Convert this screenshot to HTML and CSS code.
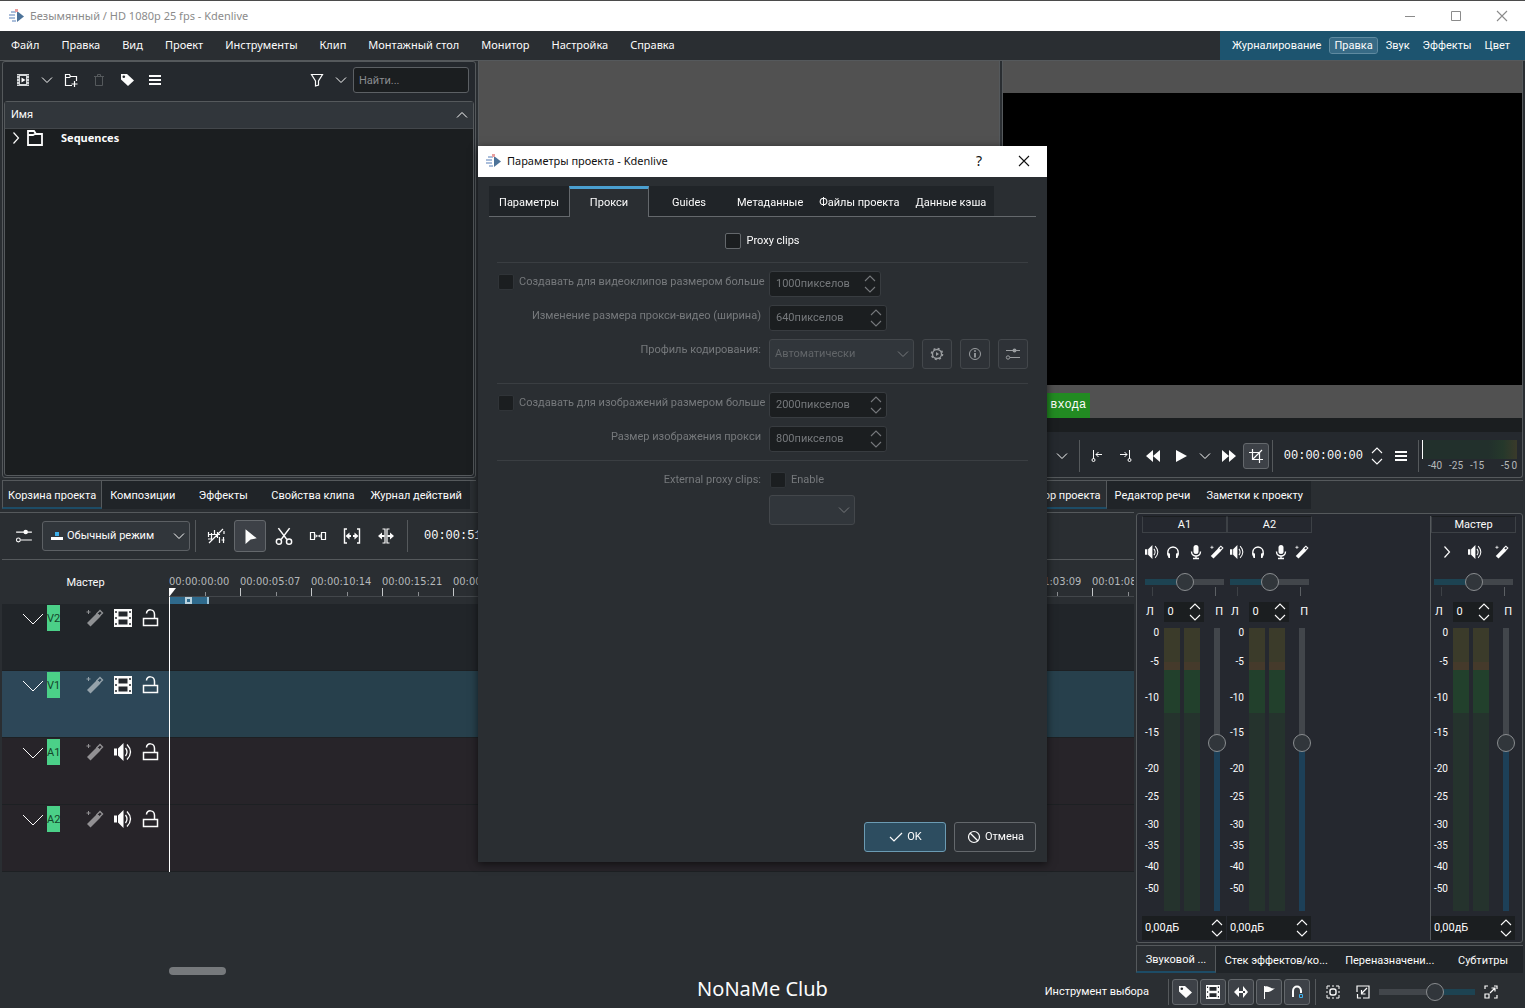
FILE: index.html
```
<!DOCTYPE html>
<html lang="ru">
<head>
    <meta charset="UTF-8">
    <meta name="viewport" content="width=device-width, initial-scale=1.0">
    <title>Безымянный / HD 1080p 25 fps - Kdenlive</title>
    <link rel="stylesheet" href="styles.css">
</head>
<body>
    <!-- Icon sprite -->
    <svg class="sprite" aria-hidden="true">
        <symbol id="i-logo" viewBox="0 0 16 16"><path d="M2 4h5M0 7h6M0 10h6M3 13h4" stroke="#8fa9cf" stroke-width="1.5"/><path d="M8 3v11l7-5.500z" fill="#4d7399"/><path d="M6 1h3v3H6z" fill="#e9a0a0"/></symbol>
        <symbol id="i-down" viewBox="0 0 16 16"><path d="M3 5.500l5 5 5-5" fill="none" stroke="currentColor"/></symbol>
        <symbol id="i-up" viewBox="0 0 16 16"><path d="M3 10.500l5-5 5 5" fill="none" stroke="currentColor"/></symbol>
        <symbol id="i-right" viewBox="0 0 16 16"><path d="M5.500 2.500l5 5.500-5 5.500" fill="none" stroke="currentColor" stroke-width="1.200"/></symbol>
        <symbol id="i-spin" viewBox="0 0 12 20"><path d="M1 7l5-5 5 5M1 13l5 5 5-5" fill="none" stroke="currentColor" stroke-width="1.100"/></symbol>
        <symbol id="i-clip" viewBox="0 0 16 16"><path d="M2 2h12v12H2z" fill="#d5d8da"/><path d="M5 4h6v8H5z" fill="#24282d"/><path d="M6.500 5.500v5l4-2.500z" fill="#fff"/><path d="M3 3v10M13 3v10" stroke="#24282d" stroke-dasharray="1 2"/></symbol>
        <symbol id="i-addfolder" viewBox="0 0 16 16"><path d="M9 13.500H2.500v-11h4l1 2h6V9M2.500 5.500h4l1-1M11.500 9v6M8.500 12h6" fill="none" stroke="currentColor" stroke-width="1.200"/></symbol>
        <symbol id="i-folder" viewBox="0 0 16 16"><path d="M1 15V1h6l2 3h6v11zM1 5h5l2-1" fill="none" stroke="currentColor" stroke-width="1.800"/></symbol>
        <symbol id="i-trash" viewBox="0 0 16 16"><path d="M3 4.500h10M4.500 4.500v9h7v-9M6.500 4V2.500h3V4" fill="none" stroke="currentColor"/></symbol>
        <symbol id="i-tag" viewBox="0 0 16 16"><path d="M2 2h6l7 6.500L9 14 2 7.500z" fill="currentColor"/><circle cx="4.800" cy="4.800" r="1.300" fill="#24282d"/></symbol>
        <symbol id="i-menu" viewBox="0 0 16 16"><path d="M2 4h12M2 8h12M2 12h12" stroke="currentColor" stroke-width="2"/></symbol>
        <symbol id="i-filter" viewBox="0 0 16 16"><path d="M2.500 2.500h11L9.500 9v4l-3 1V9z" fill="none" stroke="currentColor" stroke-width="1.200"/></symbol>
        <symbol id="i-sliders" viewBox="0 0 16 16"><path d="M1 4.500h14M5 11.500h10" stroke="currentColor"/><circle cx="9.500" cy="4.500" r="2" fill="currentColor"/><circle cx="3" cy="11.500" r="1.700" fill="none" stroke="currentColor"/></symbol>
        <symbol id="i-mode" viewBox="0 0 12 12"><path d="M0 7h12v3H0z" fill="#fff"/><path d="M4 2h4v4H4z" fill="#3daee9"/></symbol>
        <symbol id="i-mix" viewBox="0 0 18 18"><path d="M1 7.500h12M1.500 5v5M4.500 6v6M7.500 3v5M10.500 5v6M2 16L16 2M12.500 10v6M14.500 13h3M17 4v3M16.500 10v6M1 12h4" fill="none" stroke="currentColor" stroke-width="1.200"/></symbol>
        <symbol id="i-arrow" viewBox="0 0 16 16"><path d="M4 2l10 8-5.500 1L4 15z" fill="currentColor"/></symbol>
        <symbol id="i-scissors" viewBox="0 0 16 16"><path d="M3 1l7.500 10M13 1L5.500 11" fill="none" stroke="currentColor" stroke-width="1.400"/><circle cx="3.500" cy="13" r="2.300" fill="none" stroke="currentColor" stroke-width="1.300"/><circle cx="12.500" cy="13" r="2.300" fill="none" stroke="currentColor" stroke-width="1.300"/></symbol>
        <symbol id="i-spacer" viewBox="0 0 18 16"><path d="M1.500 4.500h4v7h-4zM12.500 4.500h4v7h-4z" fill="none" stroke="currentColor" stroke-width="1.200"/><path d="M6.500 6v4l2-2zM11.500 6v4l-2-2zM8 7.500h2v1H8z" fill="currentColor"/></symbol>
        <symbol id="i-slip" viewBox="0 0 18 16"><path d="M4 1H1.500v14H4M14 1h2.500v14H14" fill="none" stroke="currentColor" stroke-width="1.400"/><path d="M2.500 8l4-3.500v2.500H8v2H6.500v2.500zM15.500 8l-4-3.500v2.500H10v2h1.500v2.500z" fill="currentColor"/></symbol>
        <symbol id="i-ripple" viewBox="0 0 18 16"><path d="M5.500 1H8v14H5.500M12.500 1H10v14h2.500" fill="none" stroke="currentColor" stroke-width="1.200"/><path d="M1 8l4-3.500v2.500h2.500v2H5v2.500zM17 8l-4-3.500v2.500h-2.500v2H13v2.500z" fill="currentColor"/></symbol>
        <symbol id="i-wand" viewBox="0 0 18 18"><path d="M1 14L11 4l3.500 3.500L4.500 17.500z" fill="currentColor"/><path d="M11 4.500l3-3 2.500 2.500-3 3z" fill="none" stroke="currentColor" stroke-width="1.400"/><path d="M2.500 1v4M.5 3h4" stroke="currentColor"/></symbol>
        <symbol id="i-film" viewBox="0 0 18 18"><path d="M0 0h18v18H0z" fill="currentColor"/><path d="M4.500 2.500h9v5h-9zM4.500 10.500h9v5h-9z" fill="#24282d"/><path d="M2 2v14M16 2v14" stroke="#24282d" stroke-width="1.500" stroke-dasharray="2 4"/></symbol>
        <symbol id="i-lock" viewBox="0 0 18 18"><path d="M1.500 9.500h14v7h-14zM4.500 4.500c0-5 8-5 8 1v4" fill="none" stroke="currentColor" stroke-width="1.500"/></symbol>
        <symbol id="i-speaker" viewBox="0 0 18 18"><path d="M0 5.500h3v7H0zM4 5.500L9.500 0v18L4 12.500z" fill="currentColor"/><path d="M11.500 5q3 4 0 8M13 1.500q7 7.500 0 15" fill="none" stroke="currentColor" stroke-width="1.300"/></symbol>
        <symbol id="i-phones" viewBox="0 0 16 16"><path d="M3.500 12C-1 0 17 0 12.500 12" fill="none" stroke="currentColor" stroke-width="1.300"/><path d="M2 9l3 .5V14H3.500zM14 9l-3 .5V14h1.500z" fill="currentColor"/></symbol>
        <symbol id="i-mic" viewBox="0 0 16 16"><rect x="5.500" y="1" width="5" height="9" rx="2.500" fill="currentColor"/><path d="M3.500 7.500c0 6 9 6 9 0M8 12v3M5 14.500h6" fill="none" stroke="currentColor" stroke-width="1.400"/></symbol>
        <symbol id="i-in" viewBox="0 0 16 16"><path d="M4.500 2v9M7 6.500h6M9.500 4L7 6.500 9.500 9" fill="none" stroke="currentColor"/><circle cx="4.500" cy="12" r="1.500" fill="none" stroke="currentColor"/></symbol>
        <symbol id="i-out" viewBox="0 0 16 16"><path d="M12.500 2v9M3 6.500h7M7.500 4L10 6.500 7.500 9" fill="none" stroke="currentColor"/><circle cx="12.500" cy="12" r="1.500" fill="none" stroke="currentColor"/></symbol>
        <symbol id="i-rew" viewBox="0 0 16 16"><path d="M8 2v12L1 8zM15 2v12L8 8z" fill="currentColor"/></symbol>
        <symbol id="i-play" viewBox="0 0 16 16"><path d="M3 2v12l11-6z" fill="currentColor"/></symbol>
        <symbol id="i-ff" viewBox="0 0 16 16"><path d="M1 2v12l7-6zM8 2v12l7-6z" fill="currentColor"/></symbol>
        <symbol id="i-crop" viewBox="0 0 16 16"><path d="M4.500 1v10.500H15M1 4.500h10.500V15M5 11l9-9" fill="none" stroke="currentColor" stroke-width="1.200"/></symbol>
        <symbol id="i-gear" viewBox="0 0 16 16"><circle cx="8" cy="8" r="4.500" fill="none" stroke="currentColor" stroke-width="1.300"/><circle cx="8" cy="8" r="5.500" fill="none" stroke="currentColor" stroke-width="1.600" stroke-dasharray="2 2.320"/><path d="M7 6v4l3-2z" fill="currentColor"/></symbol>
        <symbol id="i-info" viewBox="0 0 16 16"><circle cx="8" cy="8" r="5.500" fill="none" stroke="currentColor"/><path d="M8 7v4.500M8 4.300v1.500" stroke="currentColor" stroke-width="1.800"/></symbol>
        <symbol id="i-check" viewBox="0 0 16 16"><path d="M2 8l4 4 8-8" fill="none" stroke="currentColor" stroke-width="1.200"/></symbol>
        <symbol id="i-cancel" viewBox="0 0 16 16"><circle cx="8" cy="8" r="5.500" fill="none" stroke="currentColor" stroke-width="1.200"/><path d="M4 4l8 8" stroke="currentColor" stroke-width="1.200"/></symbol>
        <symbol id="i-marks" viewBox="0 0 16 16"><path d="M6 3v10L1 8zM10 2v12l5-6zM4 7h8v2H4z" fill="currentColor"/></symbol>
        <symbol id="i-flag" viewBox="0 0 16 16"><path d="M3.500 2v13" stroke="currentColor"/><path d="M4 2.500c4-1 4 2 10 2-3 1-3 4-10 3.500z" fill="currentColor"/></symbol>
        <symbol id="i-snap" viewBox="0 0 16 16"><path d="M4 13V7c0-6 8-6 8 0v2" fill="none" stroke="currentColor" stroke-width="2"/><path d="M10.500 10.500h3v3h-3z" fill="none" stroke="#3daee9"/></symbol>
        <symbol id="i-fit" viewBox="0 0 16 16"><path d="M2 5V2h3M7 2h2M11 2h3v3M14 7v2M14 11v3h-3M9 14H7M5 14H2v-3M2 9V7" fill="none" stroke="currentColor"/><rect x="5" y="5" width="6" height="6" rx="2" fill="none" stroke="currentColor" stroke-width="1.400"/></symbol>
        <symbol id="i-zoomout" viewBox="0 0 16 16"><path d="M2 8V2h12v12H8M2.500 10v4H6M12 4L6.500 9.500M6.500 6v4h4" fill="none" stroke="currentColor" stroke-width="1.200"/></symbol>
        <symbol id="i-zoomin" viewBox="0 0 16 16"><path d="M2 5V2h3M11 2h3v3M14 11v3h-3M2 10h4v4H2zM7 9l5-5M8.500 4H12v3.500" fill="none" stroke="currentColor" stroke-width="1.200"/></symbol>
        <symbol id="i-min" viewBox="0 0 12 12"><path d="M1 6.500h10" stroke="currentColor"/></symbol>
        <symbol id="i-max" viewBox="0 0 12 12"><path d="M1.500 1.500h9v9h-9z" fill="none" stroke="currentColor"/></symbol>
        <symbol id="i-close" viewBox="0 0 12 12"><path d="M1 1l10 10M11 1L1 11" stroke="currentColor" stroke-width="1.100"/></symbol>
    </svg>

    <header class="titlebar">
        <svg class="icon"><use href="#i-logo"/></svg>
        <span class="titlebar-text">Безымянный / HD 1080p 25 fps - Kdenlive</span>
        <div class="window-buttons">
            <button aria-label="Свернуть"><svg class="icon-s"><use href="#i-min"/></svg></button>
            <button aria-label="Развернуть"><svg class="icon-s"><use href="#i-max"/></svg></button>
            <button aria-label="Закрыть"><svg class="icon-s"><use href="#i-close"/></svg></button>
        </div>
    </header>

    <nav class="menubar">
        <button>Файл</button>
        <button>Правка</button>
        <button>Вид</button>
        <button>Проект</button>
        <button>Инструменты</button>
        <button>Клип</button>
        <button>Монтажный стол</button>
        <button>Монитор</button>
        <button>Настройка</button>
        <button>Справка</button>
        <div class="layouts">
            <button>Журналирование</button>
            <button class="current">Правка</button>
            <button>Звук</button>
            <button>Эффекты</button>
            <button>Цвет</button>
        </div>
    </nav>

    <main class="workspace">
        <div class="upper">
            <!-- Project bin -->
            <section class="dock">
                <div class="bin">
                    <div class="bin-tools">
                        <button class="tool" aria-label="Добавить клип"><svg class="icon"><use href="#i-clip"/></svg></button>
                        <button class="tool" aria-label="Ещё"><svg class="icon"><use href="#i-down"/></svg></button>
                        <button class="tool" aria-label="Создать папку"><svg class="icon"><use href="#i-addfolder"/></svg></button>
                        <button class="tool off" aria-label="Удалить" disabled><svg class="icon"><use href="#i-trash"/></svg></button>
                        <button class="tool" aria-label="Метки"><svg class="icon"><use href="#i-tag"/></svg></button>
                        <button class="tool" aria-label="Меню"><svg class="icon"><use href="#i-menu"/></svg></button>
                        <button class="tool push" aria-label="Фильтр"><svg class="icon"><use href="#i-filter"/></svg></button>
                        <button class="tool narrow" aria-label="Параметры фильтра"><svg class="icon"><use href="#i-down"/></svg></button>
                        <input class="search" type="text" placeholder="Найти..." aria-label="Найти">
                    </div>
                    <div class="tree">
                        <div class="tree-head"><span>Имя</span><svg class="icon"><use href="#i-up"/></svg></div>
                        <div class="tree-row">
                            <svg class="icon"><use href="#i-right"/></svg>
                            <svg class="icon"><use href="#i-folder"/></svg>
                            <b>Sequences</b>
                        </div>
                    </div>
                </div>
                <div class="tabs">
                    <button class="tab active">Корзина проекта</button>
                    <button class="tab">Композиции</button>
                    <button class="tab">Эффекты</button>
                    <button class="tab">Свойства клипа</button>
                    <button class="tab">Журнал действий</button>
                </div>
            </section>

            <!-- Clip monitor -->
            <section class="dock">
                <div class="monitor"><div class="stage"></div></div>
                <div class="tabs"></div>
            </section>

            <!-- Project monitor -->
            <section class="dock">
                <div class="monitor">
                    <div class="stage">
                        <div class="video"></div>
                        <span class="marker">Точка входа</span>
                    </div>
                    <div class="mini-ruler"></div>
                    <div class="monitor-tools">
                        <button class="tool" aria-label="Масштаб"><svg class="icon"><use href="#i-down"/></svg></button>
                        <span class="sep"></span>
                        <button class="tool" aria-label="Точка входа"><svg class="icon"><use href="#i-in"/></svg></button>
                        <button class="tool" aria-label="Точка выхода"><svg class="icon"><use href="#i-out"/></svg></button>
                        <button class="tool" aria-label="Назад"><svg class="icon"><use href="#i-rew"/></svg></button>
                        <button class="tool" aria-label="Воспроизвести"><svg class="icon"><use href="#i-play"/></svg></button>
                        <button class="tool narrow" aria-label="Ещё"><svg class="icon"><use href="#i-down"/></svg></button>
                        <button class="tool" aria-label="Вперёд"><svg class="icon"><use href="#i-ff"/></svg></button>
                        <button class="tool pressed" aria-label="Кадрирование"><svg class="icon"><use href="#i-crop"/></svg></button>
                        <span class="sep"></span>
                        <span class="timecode">00:00:00:00</span>
                        <svg class="spin"><use href="#i-spin"/></svg>
                        <button class="tool" aria-label="Меню"><svg class="icon"><use href="#i-menu"/></svg></button>
                        <span class="sep"></span>
                        <div class="audio">
                            <div class="audio-bar"></div>
                            <div class="audio-scale"><span>-40</span><span>-25</span><span>-15</span><span class="push">-5</span><span>0</span></div>
                        </div>
                    </div>
                </div>
                <div class="tabs">
                    <button class="tab active">Монитор проекта</button>
                    <button class="tab">Редактор речи</button>
                    <button class="tab">Заметки к проекту</button>
                </div>
            </section>
        </div>

        <div class="lower">
            <!-- Timeline -->
            <section class="timeline">
                <div class="timeline-tools">
                    <button class="tool" aria-label="Настройка дорожек"><svg class="icon-l"><use href="#i-sliders"/></svg></button>
                    <div class="combo mode">
                        <svg class="icon-s"><use href="#i-mode"/></svg>
                        <select aria-label="Режим"><option>Обычный режим</option></select>
                        <svg class="icon"><use href="#i-down"/></svg>
                    </div>
                    <span class="sep"></span>
                    <button class="tool" aria-label="Микс"><svg class="icon-l"><use href="#i-mix"/></svg></button>
                    <button class="tool pressed" aria-label="Выбор"><svg class="icon-l"><use href="#i-arrow"/></svg></button>
                    <button class="tool" aria-label="Разрезать"><svg class="icon-l"><use href="#i-scissors"/></svg></button>
                    <button class="tool" aria-label="Интервал"><svg class="icon-l"><use href="#i-spacer"/></svg></button>
                    <button class="tool" aria-label="Сдвиг"><svg class="icon-l"><use href="#i-slip"/></svg></button>
                    <button class="tool" aria-label="Подгонка"><svg class="icon-l"><use href="#i-ripple"/></svg></button>
                    <span class="sep"></span>
                    <span class="timecode">00:00:51:00</span>
                </div>
                <div class="ruler-row">
                    <div class="master">Мастер</div>
                    <div class="ruler">
                        <span>00:00:00:00</span><span>00:00:05:07</span><span>00:00:10:14</span><span>00:00:15:21</span><span>00:00:21:03</span><span>00:00:26:10</span><span>00:00:31:17</span><span>00:00:36:24</span><span>00:00:42:06</span><span>00:00:47:13</span><span>00:00:52:20</span><span>00:00:58:02</span><span>00:01:03:09</span><span>00:01:08:16</span>
                        <div class="zone"></div>
                    </div>
                </div>
                <div class="tracks">
                    <div class="track">
                        <div class="track-head">
                            <svg class="fold" viewBox="0 0 20 12"><path d="M0 1l10 10L20 1" fill="none" stroke="currentColor"/></svg>
                            <span class="track-name">V2</span>
                            <svg class="icon-l dim"><use href="#i-wand"/></svg>
                            <svg class="icon-l"><use href="#i-film"/></svg>
                            <svg class="icon-l"><use href="#i-lock"/></svg>
                        </div>
                        <div class="track-body"></div>
                    </div>
                    <div class="track selected">
                        <div class="track-head">
                            <svg class="fold" viewBox="0 0 20 12"><path d="M0 1l10 10L20 1" fill="none" stroke="currentColor"/></svg>
                            <span class="track-name">V1</span>
                            <svg class="icon-l dim"><use href="#i-wand"/></svg>
                            <svg class="icon-l"><use href="#i-film"/></svg>
                            <svg class="icon-l"><use href="#i-lock"/></svg>
                        </div>
                        <div class="track-body"></div>
                    </div>
                    <div class="track sound">
                        <div class="track-head">
                            <svg class="fold" viewBox="0 0 20 12"><path d="M0 1l10 10L20 1" fill="none" stroke="currentColor"/></svg>
                            <span class="track-name">A1</span>
                            <svg class="icon-l dim"><use href="#i-wand"/></svg>
                            <svg class="icon-l"><use href="#i-speaker"/></svg>
                            <svg class="icon-l"><use href="#i-lock"/></svg>
                        </div>
                        <div class="track-body"></div>
                    </div>
                    <div class="track sound">
                        <div class="track-head">
                            <svg class="fold" viewBox="0 0 20 12"><path d="M0 1l10 10L20 1" fill="none" stroke="currentColor"/></svg>
                            <span class="track-name">A2</span>
                            <svg class="icon-l dim"><use href="#i-wand"/></svg>
                            <svg class="icon-l"><use href="#i-speaker"/></svg>
                            <svg class="icon-l"><use href="#i-lock"/></svg>
                        </div>
                        <div class="track-body"></div>
                    </div>
                </div>
                <div class="scrollbar"><div class="scroll-thumb"></div></div>
            </section>

            <!-- Audio mixer -->
            <section class="mixer-dock">
                <div class="mixer">
                    <div class="strip">
                        <div class="strip-name">A1</div>
                        <div class="strip-icons">
                            <svg class="icon-m"><use href="#i-speaker"/></svg>
                            <svg class="icon"><use href="#i-phones"/></svg>
                            <svg class="icon"><use href="#i-mic"/></svg>
                            <svg class="icon-m"><use href="#i-wand"/></svg>
                        </div>
                        <input class="pan" type="range" value="50" aria-label="Баланс A1">
                        <div class="pan-ticks"></div>
                        <div class="pan-row"><span>Л</span><div class="spinbox"><input type="text" value="0" aria-label="Баланс A1"><svg class="spin"><use href="#i-spin"/></svg></div><span>П</span></div>
                        <div class="levels">
                            <div class="scale"><span>0</span><span>-5</span><span>-10</span><span>-15</span><span>-20</span><span>-25</span><span>-30</span><span>-35</span><span>-40</span><span>-50</span></div>
                            <div class="bar"></div>
                            <div class="bar"></div>
                            <input class="volume" type="range" value="60" aria-label="Громкость A1">
                        </div>
                        <div class="spinbox gain"><input type="text" value="0,00дБ" aria-label="Усиление A1"><svg class="spin"><use href="#i-spin"/></svg></div>
                    </div>
                    <div class="strip">
                        <div class="strip-name">A2</div>
                        <div class="strip-icons">
                            <svg class="icon-m"><use href="#i-speaker"/></svg>
                            <svg class="icon"><use href="#i-phones"/></svg>
                            <svg class="icon"><use href="#i-mic"/></svg>
                            <svg class="icon-m"><use href="#i-wand"/></svg>
                        </div>
                        <input class="pan" type="range" value="50" aria-label="Баланс A2">
                        <div class="pan-ticks"></div>
                        <div class="pan-row"><span>Л</span><div class="spinbox"><input type="text" value="0" aria-label="Баланс A2"><svg class="spin"><use href="#i-spin"/></svg></div><span>П</span></div>
                        <div class="levels">
                            <div class="scale"><span>0</span><span>-5</span><span>-10</span><span>-15</span><span>-20</span><span>-25</span><span>-30</span><span>-35</span><span>-40</span><span>-50</span></div>
                            <div class="bar"></div>
                            <div class="bar"></div>
                            <input class="volume" type="range" value="60" aria-label="Громкость A2">
                        </div>
                        <div class="spinbox gain"><input type="text" value="0,00дБ" aria-label="Усиление A2"><svg class="spin"><use href="#i-spin"/></svg></div>
                    </div>
                    <div class="strip master-strip">
                        <div class="strip-name">Мастер</div>
                        <div class="strip-icons wide">
                            <svg class="icon"><use href="#i-right"/></svg>
                            <svg class="icon-m"><use href="#i-speaker"/></svg>
                            <svg class="icon-m"><use href="#i-wand"/></svg>
                        </div>
                        <input class="pan" type="range" value="50" aria-label="Баланс">
                        <div class="pan-ticks"></div>
                        <div class="pan-row"><span>Л</span><div class="spinbox"><input type="text" value="0" aria-label="Баланс"><svg class="spin"><use href="#i-spin"/></svg></div><span>П</span></div>
                        <div class="levels">
                            <div class="scale"><span>0</span><span>-5</span><span>-10</span><span>-15</span><span>-20</span><span>-25</span><span>-30</span><span>-35</span><span>-40</span><span>-50</span></div>
                            <div class="bar"></div>
                            <div class="bar"></div>
                            <input class="volume" type="range" value="60" aria-label="Громкость">
                        </div>
                        <div class="spinbox gain"><input type="text" value="0,00дБ" aria-label="Усиление"><svg class="spin"><use href="#i-spin"/></svg></div>
                    </div>
                </div>
                <div class="tabs">
                    <button class="tab active">Звуковой ...</button>
                    <button class="tab grow">Стек эффектов/ко...</button>
                    <button class="tab grow">Переназначени...</button>
                    <button class="tab">Субтитры</button>
                </div>
            </section>
        </div>
    </main>

    <footer class="statusbar">
        <span class="status-text">Инструмент выбора</span>
        <span class="sep"></span>
        <button class="tool pressed" aria-label="Цветовые метки"><svg class="icon"><use href="#i-tag"/></svg></button>
        <button class="tool pressed" aria-label="Миниатюры видео"><svg class="icon-m"><use href="#i-film"/></svg></button>
        <button class="tool pressed" aria-label="Миниатюры звука"><svg class="icon"><use href="#i-marks"/></svg></button>
        <button class="tool pressed" aria-label="Маркеры"><svg class="icon"><use href="#i-flag"/></svg></button>
        <button class="tool pressed" aria-label="Прилипание"><svg class="icon"><use href="#i-snap"/></svg></button>
        <span class="sep"></span>
        <button class="tool" aria-label="Весь проект"><svg class="icon"><use href="#i-fit"/></svg></button>
        <button class="tool" aria-label="Уменьшить"><svg class="icon"><use href="#i-zoomout"/></svg></button>
        <input class="zoom" type="range" value="60" aria-label="Масштаб">
        <button class="tool" aria-label="Увеличить"><svg class="icon"><use href="#i-zoomin"/></svg></button>
    </footer>
    <div class="watermark">NoNaMe Club</div>

    <!-- Project settings -->
    <div class="overlay">
        <div class="dialog" role="dialog" aria-label="Параметры проекта">
            <div class="dialog-title">
                <svg class="icon"><use href="#i-logo"/></svg>
                <span>Параметры проекта - Kdenlive</span>
                <button class="push" aria-label="Справка">?</button>
                <button aria-label="Закрыть"><svg class="icon-s"><use href="#i-close"/></svg></button>
            </div>
            <div class="dialog-tabs">
                <button class="tab">Параметры</button>
                <button class="tab active">Прокси</button>
                <button class="tab">Guides</button>
                <button class="tab">Метаданные</button>
                <button class="tab">Файлы проекта</button>
                <button class="tab">Данные кэша</button>
            </div>
            <form class="proxy">
                <label class="check main-check"><input type="checkbox">Proxy clips</label>
                <fieldset disabled>
                    <label class="check"><input type="checkbox">Создавать для видеоклипов размером больше</label>
                    <div class="spinbox small"><input type="text" value="1000пикселов" aria-label="Размер видеоклипов"><svg class="spin"><use href="#i-spin"/></svg></div>
                    <label for="resize">Изменение размера прокси-видео (ширина)</label>
                    <div class="spinbox"><input id="resize" type="text" value="640пикселов"><svg class="spin"><use href="#i-spin"/></svg></div>
                    <label for="profile">Профиль кодирования:</label>
                    <div class="profile">
                        <div class="combo">
                            <select id="profile"><option>Автоматически</option></select>
                            <svg class="icon"><use href="#i-down"/></svg>
                        </div>
                        <button type="button" aria-label="Настроить"><svg class="icon"><use href="#i-gear"/></svg></button>
                        <button type="button" aria-label="Сведения"><svg class="icon"><use href="#i-info"/></svg></button>
                        <button type="button" aria-label="Профили"><svg class="icon"><use href="#i-sliders"/></svg></button>
                    </div>
                </fieldset>
                <fieldset disabled>
                    <label class="check"><input type="checkbox">Создавать для изображений размером больше</label>
                    <div class="spinbox"><input type="text" value="2000пикселов" aria-label="Размер изображений"><svg class="spin"><use href="#i-spin"/></svg></div>
                    <label for="imgsize">Размер изображения прокси</label>
                    <div class="spinbox"><input id="imgsize" type="text" value="800пикселов"><svg class="spin"><use href="#i-spin"/></svg></div>
                </fieldset>
                <fieldset disabled>
                    <span class="caption">External proxy clips:</span>
                    <label class="check enable"><input type="checkbox">Enable</label>
                    <div class="combo external">
                        <select aria-label="External proxy clips"></select>
                        <svg class="icon"><use href="#i-down"/></svg>
                    </div>
                </fieldset>
            </form>
            <div class="dialog-buttons">
                <button class="ok"><svg class="icon"><use href="#i-check"/></svg>OK</button>
                <button><svg class="icon"><use href="#i-cancel"/></svg>Отмена</button>
            </div>
        </div>
    </div>
</body>
</html>
```
FILE: styles.css
```
* {
    box-sizing: border-box;
}
body {
    margin: 0;
    height: 100vh;
    display: flex;
    flex-direction: column;
    overflow: hidden;
    background-color: #2a2e32;
    color: #fcfcfc;
    font-family: Roboto, "Noto Sans", sans-serif;
    font-size: 11px;
    line-height: 16px;
}
button, input, select {
    margin: 0;
    padding: 0;
    border: 0;
    background: none;
    color: inherit;
    font: inherit;
}
svg {
    display: block;
    flex: none;
}
.sprite {
    position: absolute;
    width: 0;
    height: 0;
}
.icon { width: 16px; height: 16px; }
.icon-s { width: 12px; height: 12px; }
.icon-m { width: 14px; height: 14px; }
.icon-l { width: 18px; height: 18px; }
.spin { width: 12px; height: 20px; }
.push { margin-left: auto; }

/* Title bar and menu */
.titlebar, .menubar > button, .dialog-title, .watermark {
    font-family: "Noto Sans", sans-serif;
}
.titlebar {
    display: flex;
    align-items: center;
    flex: none;
    height: 31px;
    padding: 0 0 1px 9px;
    gap: 5px;
    border-top: 1px solid #4b4b4b;
    background-color: #fff;
    color: #8b8b8b;
}
.window-buttons {
    display: flex;
    margin-left: auto;
}
.window-buttons button {
    display: flex;
    align-items: center;
    justify-content: center;
    width: 46px;
    height: 30px;
}
.menubar {
    display: flex;
    align-items: stretch;
    flex: none;
    height: 29px;
}
.menubar > button {
    padding: 0 11px 2px;
}
.layouts {
    display: flex;
    align-items: center;
    gap: 5px;
    margin-left: auto;
    padding: 0 11px 0 8px;
    background-color: #1d546f;
}
.layouts button {
    height: 15px;
    padding: 0 4px;
    border-radius: 2px;
}
.layouts .current {
    background-color: #376a85;
    outline: 1px solid #5f8aa0;
}

/* Docks */
.workspace {
    flex: 1;
    min-height: 0;
    display: grid;
    grid-template-columns: minmax(0, 1fr);
    grid-template-rows: 451fr 464fr;
    border-top: 1px solid #55595c;
}
.upper {
    display: grid;
    grid-template-columns: minmax(0, 476fr) minmax(0, 522fr) minmax(0, 521fr);
    gap: 2px;
    min-height: 0;
    padding-right: 2px;
}
.dock {
    display: flex;
    flex-direction: column;
    min-width: 0;
    min-height: 0;
}
.tabs {
    display: flex;
    flex: none;
    height: 29px;
    margin: 2px 0 3px 2px;
    border-top: 1px solid #55595c;
}
.tab {
    min-width: 80px;
    padding: 3px 8px 0;
    background-color: #202428;
    white-space: nowrap;
}
.tabs .active {
    background-color: #2a2e32;
    border-right: 1px solid #55595c;
    border-left: 1px solid #55595c;
    border-bottom: 2px solid #1d4c66;
    padding: 5px 5px 0;
}
.tab.grow {
    flex: 1 1 auto;
}
.tool {
    display: flex;
    align-items: center;
    justify-content: center;
    flex: none;
    width: 28px;
    height: 26px;
}
.tool.narrow {
    width: 20px;
}
.tool.pressed {
    border: 1px solid #64686c;
    border-radius: 3px;
    background-color: #3d4147;
}
.off {
    color: #55595c;
}
.sep {
    flex: none;
    width: 1px;
    height: 32px;
    background-color: #55595c;
}

/* Project bin */
.bin {
    flex: 1;
    display: flex;
    flex-direction: column;
    margin-left: 2px;
    padding: 0 1px 1px;
    border: 1px solid #55595c;
    border-radius: 3px;
    background-color: #25292e;
}
.bin-tools {
    display: flex;
    align-items: center;
    height: 36px;
    margin-bottom: 3px;
    padding: 0 5px 0 7px;
}
.bin-tools .tool:nth-child(-n+3) {
    width: 24px;
}
.bin-tools .off {
    margin-left: 2px;
}
.search {
    width: 116px;
    height: 26px;
    margin-left: 2px;
    padding: 0 5px;
    border: 1px solid #5c6064;
    border-radius: 3px;
    background-color: #1b1e20;
}
.search::placeholder {
    color: #8a8d90;
}
.tree {
    flex: 1;
    border: 1px solid #55595c;
    border-radius: 3px;
    background-color: #1b1e20;
}
.tree-head {
    display: flex;
    align-items: center;
    justify-content: space-between;
    height: 27px;
    padding: 0 3px 0 6px;
    border-bottom: 1px solid #43474b;
    background-color: #31363b;
}
.tree-row {
    display: flex;
    align-items: center;
    height: 18px;
    padding-left: 3px;
    gap: 3px;
}
.tree-row b {
    margin-left: 15px;
    font-family: "Noto Sans", sans-serif;
}

/* Monitors */
.monitor {
    flex: 1;
    display: flex;
    flex-direction: column;
    border: 1px solid #55595c;
    border-top: 0;
    border-radius: 0 0 3px 3px;
    background-color: #25292e;
}
.stage {
    flex: 1;
    display: flex;
    align-items: center;
    position: relative;
    background-color: #515151;
}
.video {
    width: 100%;
    aspect-ratio: 16 / 9;
    background-color: #000;
}
.marker {
    position: absolute;
    left: 0;
    bottom: 0;
    height: 25px;
    padding: 0 4px;
    background-color: #228b22;
    font-family: "Liberation Mono", monospace;
    font-size: 12px;
    line-height: 25px;
}
.mini-ruler {
    height: 14px;
    background-color: #1b1e20;
}
.monitor-tools {
    display: flex;
    align-items: center;
    justify-content: flex-end;
    height: 45px;
    padding: 4px 5px 0 0;
}
.monitor-tools .sep {
    margin: 0 3px;
}
.monitor-tools .pressed {
    width: 26px;
}
.monitor-tools .spin {
    margin-right: 4px;
}
.timecode {
    margin: 0 8px;
    font-family: "Liberation Mono", monospace;
    font-size: 12px;
}
.audio {
    width: 95px;
    color: #b5b8ba;
    font-size: 10px;
}
.audio-bar {
    height: 19px;
    border-left: 1px solid #fcfcfc;
    background: linear-gradient(90deg, #22302c 0 70%, #25382b 85%, #3a3a2a);
}
.audio-scale {
    display: flex;
    gap: 7px;
    padding-left: 6px;
    line-height: 14px;
}
.audio-scale .push + span {
    margin-left: -5px;
}

/* Timeline */
.lower {
    display: flex;
    gap: 2px;
    min-height: 0;
}
.timeline {
    flex: 1;
    min-width: 0;
    display: flex;
    flex-direction: column;
    padding-left: 2px;
    border-top: 1px solid #55595c;
}
.timeline-tools {
    display: flex;
    align-items: center;
    flex: none;
    height: 47px;
    padding-left: 5px;
    gap: 2px;
    border-bottom: 1px solid #55595c;
}
.timeline-tools .tool {
    width: 32px;
    height: 32px;
}
.timeline-tools .sep {
    margin: 0 2px 0 3px;
}
.timeline-tools .timecode {
    margin-left: 12px;
}
.timeline-tools .tool:first-child {
    width: 34px;
    margin-right: -1px;
}
.combo {
    display: flex;
    align-items: center;
    height: 30px;
    padding: 0 2px 0 5px;
    border: 1px solid #5c6064;
    border-radius: 3px;
    background-color: #31363b;
}
.combo select {
    flex: 1;
    min-width: 0;
    appearance: none;
}
.mode {
    width: 148px;
    padding-left: 8px;
    gap: 4px;
}
.ruler-row {
    display: flex;
    flex: none;
    height: 44px;
}
.master {
    width: 167px;
    padding-top: 15px;
    text-align: center;
}
.ruler {
    flex: 1;
    min-width: 0;
    display: flex;
    position: relative;
    padding-top: 14px;
    overflow: hidden;
    color: #b5b8ba;
    font-family: "DejaVu Sans Condensed", "Noto Sans", sans-serif;
}
.ruler span {
    flex: none;
    width: 71px;
    height: 23px;
    border-bottom: 1px solid #43474b;
    background: linear-gradient(#c5c8ca, #c5c8ca) 0 100% / 1px 8px no-repeat, linear-gradient(#8a8d90, #8a8d90) 36px 100% / 1px 4px no-repeat;
}
.zone {
    position: absolute;
    left: 0;
    bottom: 0;
    width: 40px;
    height: 7px;
    border-right: 2px solid #9cc3d8;
    background: linear-gradient(#2f6a8c, #2f6a8c) 18px 2px / 3px 3px no-repeat, linear-gradient(#b9d2de, #b9d2de) 16px 0 / 7px 7px no-repeat #2f6a8c;
}
.ruler::before {
    content: "";
    position: absolute;
    left: 0;
    top: 28px;
    border-top: 9px solid #fff;
    border-right: 7px solid transparent;
}
.tracks {
    position: relative;
    flex: none;
}
.tracks::after {
    content: "";
    position: absolute;
    top: -7px;
    bottom: 0;
    left: 167px;
    width: 1px;
    background-color: #fff;
}
.track {
    display: flex;
    height: 67px;
    border-bottom: 1px solid #1d2023;
    background-color: #212529;
}
.track.sound {
    background-color: #272429;
}
.track.selected {
    background-color: #27404c;
}
.track-head {
    display: flex;
    align-items: flex-start;
    width: 167px;
    padding: 5px 0 0 21px;
}
.track-head .icon-l {
    margin-right: 10px;
}
.selected .track-head {
    background-color: #2d4758;
}
.fold {
    width: 20px;
    height: 12px;
    margin-top: 4px;
}
.track-name {
    width: 14px;
    height: 26px;
    margin: -4px 26px 0 4px;
    background-color: #4bd088;
    color: #14442a;
    line-height: 27px;
    text-align: center;
}
.dim {
    opacity: 0.5;
}
.scrollbar {
    margin: auto 0 0 167px;
}
.scroll-thumb {
    width: 57px;
    height: 8px;
    border-radius: 4px;
    background-color: #76797c;
}

/* Audio mixer */
.mixer-dock {
    flex: none;
    width: 389px;
    display: flex;
    flex-direction: column;
    padding: 0 2px 2px 0;
}
.mixer {
    flex: 1;
    min-height: 0;
    display: flex;
    margin-top: 1px;
    padding: 2px 6px 2px 5px;
    border: 1px solid #55595c;
    border-radius: 3px;
    background-color: #25282f;
}
.mixer-dock .tabs {
    height: 28px;
    margin: 2px 0 0;
}
.mixer-dock .tabs .active {
    padding: 3px 7px 0;
}
.strip {
    display: flex;
    flex-direction: column;
    width: 85px;
}
.master-strip {
    width: 86px;
    margin-left: auto;
    border-left: 1px solid #55595c;
}
.strip-name {
    height: 17px;
    border: 1px solid #3d4146;
    border-top-color: #1b1e20;
    text-align: center;
}
.strip-icons {
    display: flex;
    align-items: center;
    justify-content: space-around;
    height: 38px;
}
.strip-icons.wide {
    padding: 0 1px;
}
input[type="range"] {
    appearance: none;
    display: block;
}
input[type="range"]::-webkit-slider-thumb {
    appearance: none;
    width: 18px;
    height: 18px;
    border: 1px solid #8a8d90;
    border-radius: 50%;
    background-color: #31363b;
}
.pan, .zoom {
    height: 18px;
    border-radius: 3px;
    background: linear-gradient(90deg, #1d4352 50%, #42464b 50%) 0 50% / 100% 6px no-repeat;
}
.pan {
    width: 79px;
    margin: 2px 0 0 3px;
}
.pan-ticks {
    height: 9px;
    margin: -4px 11px 0 10px;
    border-left: 1px solid #3d4146;
    border-right: 1px solid #5c6064;
}
.pan-row {
    display: flex;
    align-items: center;
    justify-content: space-between;
    height: 22px;
    margin: 5px 0;
    padding: 0 4px;
}
.spinbox {
    display: flex;
    align-items: center;
    width: 40px;
    height: 20px;
    padding: 0 3px;
    background-color: #1b1e20;
}
.spinbox input {
    flex: 1;
    width: 0;
    min-width: 0;
}
.levels {
    flex: 1;
    min-height: 0;
    display: flex;
}
.scale {
    display: grid;
    grid-template-rows: 30fr 36fr 35fr 36fr 28fr 29fr 21fr 21fr 22fr 27fr;
    width: 17px;
    margin-right: 5px;
    font-size: 10px;
    line-height: 10px;
    text-align: right;
}
.bar {
    width: 16px;
    margin-right: 4px;
    background: linear-gradient(#3b3b2a 0 12%, #453a2b 12% 15%, #22402c 15% 30%, #25332d 30%);
}
.volume {
    writing-mode: vertical-lr;
    direction: rtl;
    width: 18px;
    height: 100%;
    margin: 0 0 0 4px;
    background: linear-gradient(#42464b 40%, #1d4058 40%) 50% 0 / 6px 100% no-repeat;
}
.gain {
    width: 84px;
    height: 24px;
    margin-top: 5px;
}

/* Status bar */
.statusbar {
    display: flex;
    align-items: center;
    justify-content: flex-end;
    flex: none;
    height: 33px;
    padding-right: 20px;
    gap: 2px;
}
.statusbar .pressed {
    width: 26px;
}
.statusbar .sep {
    height: 26px;
    margin: 0 1px 0 3px;
}
.status-text {
    margin-right: 14px;
}
.zoom {
    width: 96px;
    background-image: linear-gradient(90deg, #42464b 60%, #1d4352 60%);
}
.watermark {
    position: absolute;
    left: 0;
    right: 0;
    bottom: 3px;
    font-size: 20px;
    line-height: 32px;
    text-align: center;
    pointer-events: none;
}

/* Project settings dialog */
.overlay {
    position: fixed;
    inset: 0;
    display: flex;
    align-items: center;
    justify-content: center;
}
.dialog {
    display: flex;
    flex-direction: column;
    width: 569px;
    height: 716px;
    background-color: #2a2e32;
    box-shadow: 0 2px 8px rgba(0, 0, 0, 0.6);
}
.dialog-title {
    display: flex;
    align-items: center;
    height: 31px;
    padding: 0 3px 2px 8px;
    gap: 5px;
    background-color: #fff;
    color: #111;
}
.dialog-title button {
    display: flex;
    align-items: center;
    justify-content: center;
    width: 40px;
    height: 29px;
    font-size: 14px;
}
.dialog-tabs {
    display: flex;
    height: 31px;
    margin: 9px 11px 0;
    border-bottom: 1px solid #64686c;
}
.dialog-tabs .active {
    margin-bottom: -1px;
    padding-top: 0;
    border: 1px solid #64686c;
    border-top: 3px solid #4a9fd0;
    border-bottom: 0;
    background-color: #2a2e32;
}
.proxy {
    flex: 1;
    padding: 15px 19px 0;
}
.check {
    display: flex;
    align-items: center;
    gap: 5px;
}
.main-check {
    justify-content: center;
    height: 18px;
    margin-bottom: 12px;
}
.check input {
    appearance: none;
    flex: none;
    width: 16px;
    height: 16px;
    border: 1px solid #64686c;
    border-radius: 2px;
    background-color: #1b1e20;
}
fieldset {
    display: grid;
    grid-template-columns: 264px 1fr;
    gap: 8px;
    margin: 0;
    padding: 8px 0 14px;
    border: 0;
    border-top: 1px solid #3a3e42;
    color: #76797c;
}
fieldset + fieldset {
    padding-bottom: 8px;
}
fieldset label, .caption {
    height: 22px;
    line-height: 22px;
    text-align: right;
    white-space: nowrap;
}
fieldset .check {
    padding-left: 1px;
}
fieldset .check input {
    border-color: #303438;
}
fieldset .spinbox {
    width: 118px;
    height: 26px;
    padding: 0 4px 0 6px;
    border: 1px solid #383c40;
    border-radius: 3px;
}
fieldset .small {
    width: 112px;
}
fieldset .combo {
    width: 145px;
    border-color: #43474b;
}
.profile {
    display: flex;
    gap: 8px;
}
.profile button {
    display: flex;
    align-items: center;
    justify-content: center;
    width: 30px;
    height: 30px;
    border: 1px solid #43474b;
    border-radius: 3px;
    background-color: #2e3237;
    color: #9a9da0;
}
.enable {
    justify-self: start;
}
fieldset .external {
    grid-column: 2;
    width: 86px;
    margin-top: -4px;
}
.dialog-buttons {
    display: flex;
    justify-content: flex-end;
    gap: 8px;
    padding: 0 11px 10px;
}
.dialog-buttons button {
    display: flex;
    align-items: center;
    justify-content: center;
    gap: 3px;
    width: 82px;
    height: 30px;
    border: 1px solid #64686c;
    border-radius: 3px;
    background-color: #2e3237;
}
.dialog-buttons .ok {
    border-color: #6b9bb3;
    background-color: #2d4d60;
}
```
